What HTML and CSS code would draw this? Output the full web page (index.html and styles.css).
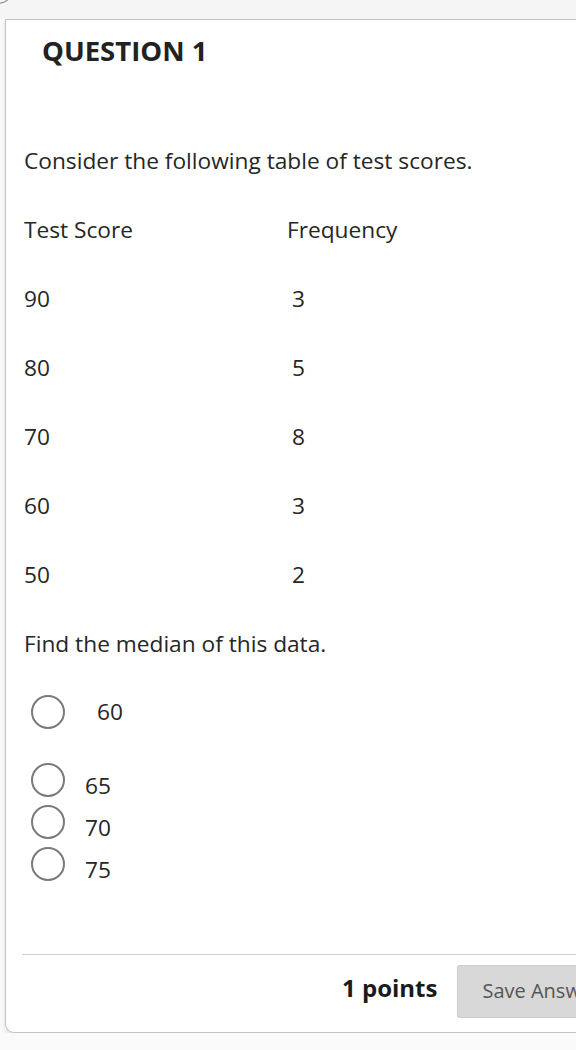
FILE: index.html
```html
<!DOCTYPE html>
<html>
<head>
<meta charset="utf-8">
<link rel="stylesheet" href="styles.css">
</head>
<body>
<div class="topband"><span class="arc"></span></div>
<div class="card">
  <h2 class="qtitle">QUESTION 1</h2>
  <div class="qbody">
    <p class="line">Consider the following table of test scores.</p>
    <div class="tbl">
      <div class="row"><span class="c1">Test Score</span><span class="c2">Frequency</span></div>
      <div class="row"><span class="c1">90</span><span class="c2 num">3</span></div>
      <div class="row"><span class="c1">80</span><span class="c2 num">5</span></div>
      <div class="row"><span class="c1">70</span><span class="c2 num">8</span></div>
      <div class="row"><span class="c1">60</span><span class="c2 num">3</span></div>
      <div class="row"><span class="c1">50</span><span class="c2 num">2</span></div>
    </div>
    <p class="line">Find the median of this data.</p>
    <div class="opt first"><span class="radio"></span><span class="lbl">60</span></div>
    <div class="opts">
      <div class="opt"><span class="radio"></span><span class="lbl">65</span></div>
      <div class="opt"><span class="radio"></span><span class="lbl">70</span></div>
      <div class="opt"><span class="radio"></span><span class="lbl">75</span></div>
    </div>
  </div>
  <div class="footer">
    <span class="points">1 points</span>
    <button class="save">Save Answer</button>
  </div>
</div>
</body>
</html>
```
FILE: styles.css
```css
html, body {
  margin: 0;
  padding: 0;
  background: #fafafa;
  font-family: "Open Sans", "Noto Sans", sans-serif;
  color: #262626;
  overflow: hidden;
}
.topband {
  position: relative;
  height: 19px;
  background: #f5f5f5;
  overflow: hidden;
}
.arc {
  position: absolute;
  left: -22px;
  top: -34px;
  width: 36px;
  height: 36px;
  border: 1px solid #777;
  border-radius: 50%;
}
.card {
  margin-left: 5px;
  width: 600px;
  background: #fff;
  border: 1px solid #c4c4c4;
  border-right: none;
  border-bottom-left-radius: 9px;
  box-shadow: 0 2px 4px rgba(0,0,0,0.12);
  height: 1014px;
  box-sizing: border-box;
  display: flex;
  flex-direction: column;
  overflow: hidden;
}
.qtitle {
  margin: 0;
  padding: 13px 0 0 36px;
  font-size: 27.5px;
  line-height: 36px;
  font-weight: 700;
  color: #222;
}
.qbody {
  padding: 77px 0 0 18px;
}
.line {
  margin: 0;
  font-size: 22.7px;
  line-height: 30px;
  height: 69px;
}
.row {
  display: flex;
  font-size: 22.7px;
  line-height: 30px;
  height: 69px;
}
.c1 { width: 263px; }
.num { padding-left: 5px; }
.opt {
  display: flex;
  align-items: center;
  height: 42px;
}
.opt.first {
  height: 34px;
  margin-top: -3px;
  margin-bottom: 30px;
}
.radio {
  width: 34px;
  height: 34px;
  box-sizing: border-box;
  border: 2px solid #7a7a7a;
  border-radius: 50%;
  margin-left: 7px;
  flex: none;
}
.lbl {
  font-size: 22.7px;
  line-height: 30px;
  margin-left: 20px;
  padding-top: 12px;
}
.opt.first .lbl {
  margin-left: 32px;
  padding-top: 0;
}
.footer {
  margin: auto 0 0 16px;
  border-top: 1px solid #d0d0d0;
  height: 78px;
  box-sizing: border-box;
  display: flex;
  align-items: flex-start;
  gap: 20px;
  padding: 10px 0 0 320px;
}
.points {
  flex: none;
  white-space: nowrap;
  font-size: 24px;
  line-height: 33px;
  margin-top: 6px;
  font-weight: 700;
  color: #1a1a1a;
}
.save {
  flex: none;
  height: 53px;
  width: 160px;
  background: #d8d8d8;
  border: 1px solid #cfcfcf;
  border-radius: 2px;
  font-family: "Open Sans", sans-serif;
  font-size: 20px;
  color: #555;
  text-align: left;
  padding: 0 0 3px 24px;
  white-space: nowrap;
}
```
